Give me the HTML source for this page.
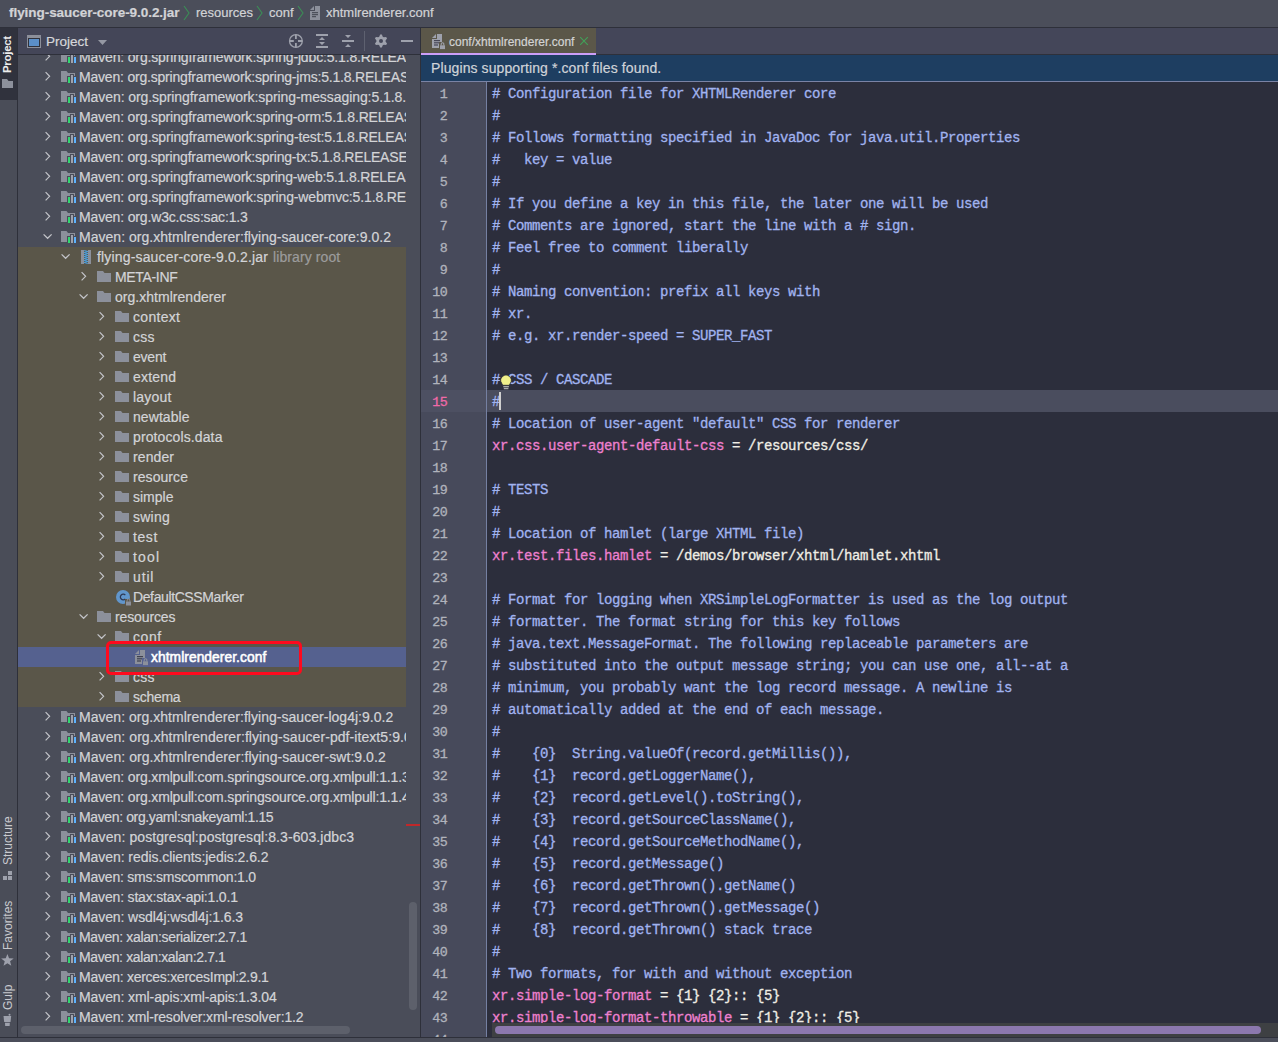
<!DOCTYPE html>
<html><head><meta charset="utf-8">
<style>
*{margin:0;padding:0;box-sizing:border-box}
html,body{width:1278px;height:1042px;overflow:hidden;background:#4b4e5a;font-family:"Liberation Sans",sans-serif}
.a{position:absolute}
.t{position:absolute;top:5px;white-space:nowrap;color:#d2d3d6;font-size:13px;-webkit-text-stroke:0.2px currentColor}
.row{position:absolute}
.tx{position:absolute;white-space:nowrap;color:#d3d4d7;font-size:14px;letter-spacing:0px;line-height:16px;-webkit-text-stroke:0.2px currentColor}
.ln{position:absolute;left:421px;width:26.1px;height:22px;line-height:22px;text-align:right;font-family:"Liberation Mono",monospace;font-size:13.33px;letter-spacing:-0.6px;-webkit-text-stroke:0.3px currentColor}
.cl{position:absolute;left:492px;height:22px;line-height:22px;white-space:pre;font-family:"Liberation Mono",monospace;font-size:14px;letter-spacing:-0.4px;color:#a1b3f0;-webkit-text-stroke:0.3px currentColor}
.k{color:#ee80cf}.v{color:#f0eee6}
</style></head><body>
<!-- title bar -->
<div class="a" style="left:0;top:0;width:1278px;height:27px;background:#4b4e5a"></div>
<span class="t" style="left:9px;top:4.5px;font-weight:bold;font-size:13.5px;letter-spacing:-0.05px">flying-saucer-core-9.0.2.jar</span>
<svg width="8" height="16" viewBox="0 0 8 16" style="position:absolute;left:183px;top:5px"><path d="M1 1 L6 8 L1 15" fill="none" stroke="#3b8f56" stroke-width="1.1"/></svg>
<span class="t" style="left:196px">resources</span>
<svg width="8" height="16" viewBox="0 0 8 16" style="position:absolute;left:256px;top:5px"><path d="M1 1 L6 8 L1 15" fill="none" stroke="#3b8f56" stroke-width="1.1"/></svg>
<span class="t" style="left:269px">conf</span>
<svg width="8" height="16" viewBox="0 0 8 16" style="position:absolute;left:297px;top:5px"><path d="M1 1 L6 8 L1 15" fill="none" stroke="#3b8f56" stroke-width="1.1"/></svg>
<svg width="10" height="14" viewBox="0 0 10 14" style="position:absolute;left:310px;top:6px"><path d="M0 4 L4 0 V4 Z" fill="#8c909b"/><path d="M5 0 H10 V14 H0 V5 H5 Z" fill="#8c909b"/><rect x="2" y="6.2" width="6" height="1" fill="#3f424d"/><rect x="2" y="8.2" width="6" height="1" fill="#3f424d"/><rect x="2" y="10.2" width="4" height="1" fill="#3f424d"/></svg>
<span class="t" style="left:326px">xhtmlrenderer.conf</span>
<div class="a" style="left:0;top:27px;width:1278px;height:1px;background:#2e303a"></div>

<!-- left stripe -->
<div class="a" style="left:0;top:28px;width:17px;height:1009px;background:#4a4d58"></div>
<div class="a" style="left:0;top:28px;width:17px;height:72px;background:#30323d"></div>
<div class="a" style="left:17px;top:28px;width:1px;height:1009px;background:#2e303a"></div>

<!-- project panel -->
<div class="a" style="left:18px;top:28px;width:402px;height:26px;background:#444658"></div>
<div class="a" style="left:18px;top:54px;width:402px;height:1px;background:#2e303a"></div>
<div class="a" id="tree" style="left:18px;top:55px;width:402px;height:982px;background:#4a4d59;overflow:hidden">
<div class="a" style="left:0;top:192px;width:388px;height:460px;background:#5a5649"></div>
<div class="a" style="left:0;top:592px;width:388px;height:20px;background:#55618f"></div>
<div class="a" style="left:0;top:0;width:388px;height:982px;overflow:hidden">
<svg width="8" height="12" viewBox="0 0 8 12" style="position:absolute;left:26px;top:-4px"><path d="M1.6 1.2 L5.6 5.3 L1.6 9.4" fill="none" stroke="#c3c4c9" stroke-width="1.2"/></svg><svg width="16" height="13" viewBox="0 0 16 13" style="position:absolute;left:43px;top:-4px"><path d="M0 0 H5.5 L7 2 H14 V11 H0 Z" fill="#8c909b"/><rect x="6" y="5" width="4" height="8" fill="#4a4d59"/><rect x="9" y="3" width="4" height="10" fill="#4a4d59"/><rect x="12" y="5" width="4" height="8" fill="#4a4d59"/><rect x="7" y="6" width="2" height="6" fill="#30d970"/><rect x="10" y="4" width="2" height="8" fill="#a0a3ae"/><rect x="13" y="6" width="2" height="6" fill="#5cb3ff"/></svg><span class="tx" style="left:61px;top:-6px;letter-spacing:-0.152px">Maven: org.springframework:spring-jdbc:5.1.8.RELEASE</span><svg width="8" height="12" viewBox="0 0 8 12" style="position:absolute;left:26px;top:16px"><path d="M1.6 1.2 L5.6 5.3 L1.6 9.4" fill="none" stroke="#c3c4c9" stroke-width="1.2"/></svg><svg width="16" height="13" viewBox="0 0 16 13" style="position:absolute;left:43px;top:16px"><path d="M0 0 H5.5 L7 2 H14 V11 H0 Z" fill="#8c909b"/><rect x="6" y="5" width="4" height="8" fill="#4a4d59"/><rect x="9" y="3" width="4" height="10" fill="#4a4d59"/><rect x="12" y="5" width="4" height="8" fill="#4a4d59"/><rect x="7" y="6" width="2" height="6" fill="#30d970"/><rect x="10" y="4" width="2" height="8" fill="#a0a3ae"/><rect x="13" y="6" width="2" height="6" fill="#5cb3ff"/></svg><span class="tx" style="left:61px;top:14px;letter-spacing:-0.2px">Maven: org.springframework:spring-jms:5.1.8.RELEASE</span><svg width="8" height="12" viewBox="0 0 8 12" style="position:absolute;left:26px;top:36px"><path d="M1.6 1.2 L5.6 5.3 L1.6 9.4" fill="none" stroke="#c3c4c9" stroke-width="1.2"/></svg><svg width="16" height="13" viewBox="0 0 16 13" style="position:absolute;left:43px;top:36px"><path d="M0 0 H5.5 L7 2 H14 V11 H0 Z" fill="#8c909b"/><rect x="6" y="5" width="4" height="8" fill="#4a4d59"/><rect x="9" y="3" width="4" height="10" fill="#4a4d59"/><rect x="12" y="5" width="4" height="8" fill="#4a4d59"/><rect x="7" y="6" width="2" height="6" fill="#30d970"/><rect x="10" y="4" width="2" height="8" fill="#a0a3ae"/><rect x="13" y="6" width="2" height="6" fill="#5cb3ff"/></svg><span class="tx" style="left:61px;top:34px;letter-spacing:-0.074px">Maven: org.springframework:spring-messaging:5.1.8.RELEASE</span><svg width="8" height="12" viewBox="0 0 8 12" style="position:absolute;left:26px;top:56px"><path d="M1.6 1.2 L5.6 5.3 L1.6 9.4" fill="none" stroke="#c3c4c9" stroke-width="1.2"/></svg><svg width="16" height="13" viewBox="0 0 16 13" style="position:absolute;left:43px;top:56px"><path d="M0 0 H5.5 L7 2 H14 V11 H0 Z" fill="#8c909b"/><rect x="6" y="5" width="4" height="8" fill="#4a4d59"/><rect x="9" y="3" width="4" height="10" fill="#4a4d59"/><rect x="12" y="5" width="4" height="8" fill="#4a4d59"/><rect x="7" y="6" width="2" height="6" fill="#30d970"/><rect x="10" y="4" width="2" height="8" fill="#a0a3ae"/><rect x="13" y="6" width="2" height="6" fill="#5cb3ff"/></svg><span class="tx" style="left:61px;top:54px;letter-spacing:-0.17px">Maven: org.springframework:spring-orm:5.1.8.RELEASE</span><svg width="8" height="12" viewBox="0 0 8 12" style="position:absolute;left:26px;top:76px"><path d="M1.6 1.2 L5.6 5.3 L1.6 9.4" fill="none" stroke="#c3c4c9" stroke-width="1.2"/></svg><svg width="16" height="13" viewBox="0 0 16 13" style="position:absolute;left:43px;top:76px"><path d="M0 0 H5.5 L7 2 H14 V11 H0 Z" fill="#8c909b"/><rect x="6" y="5" width="4" height="8" fill="#4a4d59"/><rect x="9" y="3" width="4" height="10" fill="#4a4d59"/><rect x="12" y="5" width="4" height="8" fill="#4a4d59"/><rect x="7" y="6" width="2" height="6" fill="#30d970"/><rect x="10" y="4" width="2" height="8" fill="#a0a3ae"/><rect x="13" y="6" width="2" height="6" fill="#5cb3ff"/></svg><span class="tx" style="left:61px;top:74px;letter-spacing:-0.136px">Maven: org.springframework:spring-test:5.1.8.RELEASE</span><svg width="8" height="12" viewBox="0 0 8 12" style="position:absolute;left:26px;top:96px"><path d="M1.6 1.2 L5.6 5.3 L1.6 9.4" fill="none" stroke="#c3c4c9" stroke-width="1.2"/></svg><svg width="16" height="13" viewBox="0 0 16 13" style="position:absolute;left:43px;top:96px"><path d="M0 0 H5.5 L7 2 H14 V11 H0 Z" fill="#8c909b"/><rect x="6" y="5" width="4" height="8" fill="#4a4d59"/><rect x="9" y="3" width="4" height="10" fill="#4a4d59"/><rect x="12" y="5" width="4" height="8" fill="#4a4d59"/><rect x="7" y="6" width="2" height="6" fill="#30d970"/><rect x="10" y="4" width="2" height="8" fill="#a0a3ae"/><rect x="13" y="6" width="2" height="6" fill="#5cb3ff"/></svg><span class="tx" style="left:61px;top:94px;letter-spacing:-0.199px">Maven: org.springframework:spring-tx:5.1.8.RELEASE</span><svg width="8" height="12" viewBox="0 0 8 12" style="position:absolute;left:26px;top:116px"><path d="M1.6 1.2 L5.6 5.3 L1.6 9.4" fill="none" stroke="#c3c4c9" stroke-width="1.2"/></svg><svg width="16" height="13" viewBox="0 0 16 13" style="position:absolute;left:43px;top:116px"><path d="M0 0 H5.5 L7 2 H14 V11 H0 Z" fill="#8c909b"/><rect x="6" y="5" width="4" height="8" fill="#4a4d59"/><rect x="9" y="3" width="4" height="10" fill="#4a4d59"/><rect x="12" y="5" width="4" height="8" fill="#4a4d59"/><rect x="7" y="6" width="2" height="6" fill="#30d970"/><rect x="10" y="4" width="2" height="8" fill="#a0a3ae"/><rect x="13" y="6" width="2" height="6" fill="#5cb3ff"/></svg><span class="tx" style="left:61px;top:114px;letter-spacing:-0.169px">Maven: org.springframework:spring-web:5.1.8.RELEASE</span><svg width="8" height="12" viewBox="0 0 8 12" style="position:absolute;left:26px;top:136px"><path d="M1.6 1.2 L5.6 5.3 L1.6 9.4" fill="none" stroke="#c3c4c9" stroke-width="1.2"/></svg><svg width="16" height="13" viewBox="0 0 16 13" style="position:absolute;left:43px;top:136px"><path d="M0 0 H5.5 L7 2 H14 V11 H0 Z" fill="#8c909b"/><rect x="6" y="5" width="4" height="8" fill="#4a4d59"/><rect x="9" y="3" width="4" height="10" fill="#4a4d59"/><rect x="12" y="5" width="4" height="8" fill="#4a4d59"/><rect x="7" y="6" width="2" height="6" fill="#30d970"/><rect x="10" y="4" width="2" height="8" fill="#a0a3ae"/><rect x="13" y="6" width="2" height="6" fill="#5cb3ff"/></svg><span class="tx" style="left:61px;top:134px;letter-spacing:-0.139px">Maven: org.springframework:spring-webmvc:5.1.8.RELEASE</span><svg width="8" height="12" viewBox="0 0 8 12" style="position:absolute;left:26px;top:156px"><path d="M1.6 1.2 L5.6 5.3 L1.6 9.4" fill="none" stroke="#c3c4c9" stroke-width="1.2"/></svg><svg width="16" height="13" viewBox="0 0 16 13" style="position:absolute;left:43px;top:156px"><path d="M0 0 H5.5 L7 2 H14 V11 H0 Z" fill="#8c909b"/><rect x="6" y="5" width="4" height="8" fill="#4a4d59"/><rect x="9" y="3" width="4" height="10" fill="#4a4d59"/><rect x="12" y="5" width="4" height="8" fill="#4a4d59"/><rect x="7" y="6" width="2" height="6" fill="#30d970"/><rect x="10" y="4" width="2" height="8" fill="#a0a3ae"/><rect x="13" y="6" width="2" height="6" fill="#5cb3ff"/></svg><span class="tx" style="left:61px;top:154px;letter-spacing:-0.157px">Maven: org.w3c.css:sac:1.3</span><svg width="12" height="8" viewBox="0 0 12 8" style="position:absolute;left:24px;top:178px"><path d="M1.6 1.4 L5.6 5.3 L9.6 1.4" fill="none" stroke="#c3c4c9" stroke-width="1.25"/></svg><svg width="16" height="13" viewBox="0 0 16 13" style="position:absolute;left:43px;top:176px"><path d="M0 0 H5.5 L7 2 H14 V11 H0 Z" fill="#8c909b"/><rect x="6" y="5" width="4" height="8" fill="#4a4d59"/><rect x="9" y="3" width="4" height="10" fill="#4a4d59"/><rect x="12" y="5" width="4" height="8" fill="#4a4d59"/><rect x="7" y="6" width="2" height="6" fill="#30d970"/><rect x="10" y="4" width="2" height="8" fill="#a0a3ae"/><rect x="13" y="6" width="2" height="6" fill="#5cb3ff"/></svg><span class="tx" style="left:61px;top:174px;letter-spacing:0.031px">Maven: org.xhtmlrenderer:flying-saucer-core:9.0.2</span><svg width="12" height="8" viewBox="0 0 12 8" style="position:absolute;left:42px;top:198px"><path d="M1.6 1.4 L5.6 5.3 L9.6 1.4" fill="none" stroke="#c3c4c9" stroke-width="1.25"/></svg><svg width="11" height="14" viewBox="0 0 11 14" style="position:absolute;left:63px;top:195px"><rect x="0" y="0" width="3" height="14" fill="#8c909b"/><rect x="7" y="0" width="3" height="14" fill="#8c909b"/><path d="M3.2 0.5 L6.8 1.5 L3.2 2.5 L6.8 3.5 L3.2 4.5 L6.8 5.5 L3.2 6.5 L6.8 7.5 L3.2 8.5 L6.8 9.5 L3.2 10.5 L6.8 11.5 L3.2 12.5 L6.8 13.5" fill="none" stroke="#4aa8f0" stroke-width="0.9"/></svg><span class="tx" style="left:79px;top:194px;letter-spacing:0.163px">flying-saucer-core-9.0.2.jar</span><span class="tx" style="left:255px;top:194px;color:#9c9c9c;letter-spacing:0.1px">library root</span><svg width="8" height="12" viewBox="0 0 8 12" style="position:absolute;left:62px;top:216px"><path d="M1.6 1.2 L5.6 5.3 L1.6 9.4" fill="none" stroke="#c3c4c9" stroke-width="1.2"/></svg><svg width="14" height="11" viewBox="0 0 14 11" style="position:absolute;left:79px;top:216px"><path d="M0 0 H6 L7.5 2 H14 V11 H0 Z" fill="#8c909b"/></svg><span class="tx" style="left:97px;top:214px;letter-spacing:-0.333px">META-INF</span><svg width="12" height="8" viewBox="0 0 12 8" style="position:absolute;left:60px;top:238px"><path d="M1.6 1.4 L5.6 5.3 L9.6 1.4" fill="none" stroke="#c3c4c9" stroke-width="1.25"/></svg><svg width="14" height="11" viewBox="0 0 14 11" style="position:absolute;left:79px;top:236px"><path d="M0 0 H6 L7.5 2 H14 V11 H0 Z" fill="#8c909b"/></svg><span class="tx" style="left:97px;top:234px;letter-spacing:0.03px">org.xhtmlrenderer</span><svg width="8" height="12" viewBox="0 0 8 12" style="position:absolute;left:80px;top:256px"><path d="M1.6 1.2 L5.6 5.3 L1.6 9.4" fill="none" stroke="#c3c4c9" stroke-width="1.2"/></svg><svg width="14" height="11" viewBox="0 0 14 11" style="position:absolute;left:97px;top:256px"><path d="M0 0 H6 L7.5 2 H14 V11 H0 Z" fill="#8c909b"/></svg><span class="tx" style="left:115px;top:254px;letter-spacing:0.308px">context</span><svg width="8" height="12" viewBox="0 0 8 12" style="position:absolute;left:80px;top:276px"><path d="M1.6 1.2 L5.6 5.3 L1.6 9.4" fill="none" stroke="#c3c4c9" stroke-width="1.2"/></svg><svg width="14" height="11" viewBox="0 0 14 11" style="position:absolute;left:97px;top:276px"><path d="M0 0 H6 L7.5 2 H14 V11 H0 Z" fill="#8c909b"/></svg><span class="tx" style="left:115px;top:274px;letter-spacing:0.2px">css</span><svg width="8" height="12" viewBox="0 0 8 12" style="position:absolute;left:80px;top:296px"><path d="M1.6 1.2 L5.6 5.3 L1.6 9.4" fill="none" stroke="#c3c4c9" stroke-width="1.2"/></svg><svg width="14" height="11" viewBox="0 0 14 11" style="position:absolute;left:97px;top:296px"><path d="M0 0 H6 L7.5 2 H14 V11 H0 Z" fill="#8c909b"/></svg><span class="tx" style="left:115px;top:294px;letter-spacing:-0.221px">event</span><svg width="8" height="12" viewBox="0 0 8 12" style="position:absolute;left:80px;top:316px"><path d="M1.6 1.2 L5.6 5.3 L1.6 9.4" fill="none" stroke="#c3c4c9" stroke-width="1.2"/></svg><svg width="14" height="11" viewBox="0 0 14 11" style="position:absolute;left:97px;top:316px"><path d="M0 0 H6 L7.5 2 H14 V11 H0 Z" fill="#8c909b"/></svg><span class="tx" style="left:115px;top:314px;letter-spacing:0.183px">extend</span><svg width="8" height="12" viewBox="0 0 8 12" style="position:absolute;left:80px;top:336px"><path d="M1.6 1.2 L5.6 5.3 L1.6 9.4" fill="none" stroke="#c3c4c9" stroke-width="1.2"/></svg><svg width="14" height="11" viewBox="0 0 14 11" style="position:absolute;left:97px;top:336px"><path d="M0 0 H6 L7.5 2 H14 V11 H0 Z" fill="#8c909b"/></svg><span class="tx" style="left:115px;top:334px;letter-spacing:0.183px">layout</span><svg width="8" height="12" viewBox="0 0 8 12" style="position:absolute;left:80px;top:356px"><path d="M1.6 1.2 L5.6 5.3 L1.6 9.4" fill="none" stroke="#c3c4c9" stroke-width="1.2"/></svg><svg width="14" height="11" viewBox="0 0 14 11" style="position:absolute;left:97px;top:356px"><path d="M0 0 H6 L7.5 2 H14 V11 H0 Z" fill="#8c909b"/></svg><span class="tx" style="left:115px;top:354px;letter-spacing:0.067px">newtable</span><svg width="8" height="12" viewBox="0 0 8 12" style="position:absolute;left:80px;top:376px"><path d="M1.6 1.2 L5.6 5.3 L1.6 9.4" fill="none" stroke="#c3c4c9" stroke-width="1.2"/></svg><svg width="14" height="11" viewBox="0 0 14 11" style="position:absolute;left:97px;top:376px"><path d="M0 0 H6 L7.5 2 H14 V11 H0 Z" fill="#8c909b"/></svg><span class="tx" style="left:115px;top:374px;letter-spacing:0.113px">protocols.data</span><svg width="8" height="12" viewBox="0 0 8 12" style="position:absolute;left:80px;top:396px"><path d="M1.6 1.2 L5.6 5.3 L1.6 9.4" fill="none" stroke="#c3c4c9" stroke-width="1.2"/></svg><svg width="14" height="11" viewBox="0 0 14 11" style="position:absolute;left:97px;top:396px"><path d="M0 0 H6 L7.5 2 H14 V11 H0 Z" fill="#8c909b"/></svg><span class="tx" style="left:115px;top:394px;letter-spacing:0.089px">render</span><svg width="8" height="12" viewBox="0 0 8 12" style="position:absolute;left:80px;top:416px"><path d="M1.6 1.2 L5.6 5.3 L1.6 9.4" fill="none" stroke="#c3c4c9" stroke-width="1.2"/></svg><svg width="14" height="11" viewBox="0 0 14 11" style="position:absolute;left:97px;top:416px"><path d="M0 0 H6 L7.5 2 H14 V11 H0 Z" fill="#8c909b"/></svg><span class="tx" style="left:115px;top:414px;letter-spacing:0.065px">resource</span><svg width="8" height="12" viewBox="0 0 8 12" style="position:absolute;left:80px;top:436px"><path d="M1.6 1.2 L5.6 5.3 L1.6 9.4" fill="none" stroke="#c3c4c9" stroke-width="1.2"/></svg><svg width="14" height="11" viewBox="0 0 14 11" style="position:absolute;left:97px;top:436px"><path d="M0 0 H6 L7.5 2 H14 V11 H0 Z" fill="#8c909b"/></svg><span class="tx" style="left:115px;top:434px;letter-spacing:-0.001px">simple</span><svg width="8" height="12" viewBox="0 0 8 12" style="position:absolute;left:80px;top:456px"><path d="M1.6 1.2 L5.6 5.3 L1.6 9.4" fill="none" stroke="#c3c4c9" stroke-width="1.2"/></svg><svg width="14" height="11" viewBox="0 0 14 11" style="position:absolute;left:97px;top:456px"><path d="M0 0 H6 L7.5 2 H14 V11 H0 Z" fill="#8c909b"/></svg><span class="tx" style="left:115px;top:454px;letter-spacing:0.223px">swing</span><svg width="8" height="12" viewBox="0 0 8 12" style="position:absolute;left:80px;top:476px"><path d="M1.6 1.2 L5.6 5.3 L1.6 9.4" fill="none" stroke="#c3c4c9" stroke-width="1.2"/></svg><svg width="14" height="11" viewBox="0 0 14 11" style="position:absolute;left:97px;top:476px"><path d="M0 0 H6 L7.5 2 H14 V11 H0 Z" fill="#8c909b"/></svg><span class="tx" style="left:115px;top:474px;letter-spacing:0.571px">test</span><svg width="8" height="12" viewBox="0 0 8 12" style="position:absolute;left:80px;top:496px"><path d="M1.6 1.2 L5.6 5.3 L1.6 9.4" fill="none" stroke="#c3c4c9" stroke-width="1.2"/></svg><svg width="14" height="11" viewBox="0 0 14 11" style="position:absolute;left:97px;top:496px"><path d="M0 0 H6 L7.5 2 H14 V11 H0 Z" fill="#8c909b"/></svg><span class="tx" style="left:115px;top:494px;letter-spacing:1.143px">tool</span><svg width="8" height="12" viewBox="0 0 8 12" style="position:absolute;left:80px;top:516px"><path d="M1.6 1.2 L5.6 5.3 L1.6 9.4" fill="none" stroke="#c3c4c9" stroke-width="1.2"/></svg><svg width="14" height="11" viewBox="0 0 14 11" style="position:absolute;left:97px;top:516px"><path d="M0 0 H6 L7.5 2 H14 V11 H0 Z" fill="#8c909b"/></svg><span class="tx" style="left:115px;top:514px;letter-spacing:0.857px">util</span><svg width="16" height="16" viewBox="0 0 16 16" style="position:absolute;left:98px;top:535px"><circle cx="7" cy="7" r="7" fill="#6196cc"/><path d="M9.3 5.2 A2.8 2.8 0 1 0 9.3 8.8" fill="none" stroke="#2e3a55" stroke-width="1.3"/><rect x="9" y="9" width="6" height="7" fill="#5a5649"/><rect x="10" y="11.5" width="5" height="4" fill="#8c909b"/><path d="M11.2 11.5 V10.3 A1.3 1.3 0 0 1 13.8 10.3 V11.5" fill="none" stroke="#8c909b" stroke-width="1"/></svg><span class="tx" style="left:115px;top:534px;letter-spacing:-0.387px">DefaultCSSMarker</span><svg width="12" height="8" viewBox="0 0 12 8" style="position:absolute;left:60px;top:558px"><path d="M1.6 1.4 L5.6 5.3 L9.6 1.4" fill="none" stroke="#c3c4c9" stroke-width="1.25"/></svg><svg width="14" height="11" viewBox="0 0 14 11" style="position:absolute;left:79px;top:556px"><path d="M0 0 H6 L7.5 2 H14 V11 H0 Z" fill="#8c909b"/></svg><span class="tx" style="left:97px;top:554px;letter-spacing:-0.116px">resources</span><svg width="12" height="8" viewBox="0 0 12 8" style="position:absolute;left:78px;top:578px"><path d="M1.6 1.4 L5.6 5.3 L9.6 1.4" fill="none" stroke="#c3c4c9" stroke-width="1.25"/></svg><svg width="14" height="11" viewBox="0 0 14 11" style="position:absolute;left:97px;top:576px"><path d="M0 0 H6 L7.5 2 H14 V11 H0 Z" fill="#8c909b"/></svg><span class="tx" style="left:115px;top:574px;letter-spacing:0.571px">conf</span><svg width="14" height="16" viewBox="0 0 14 16" style="position:absolute;left:117px;top:595px"><path d="M0 4 L4 0 V4 Z" fill="#8c909b"/><path d="M5 0 H10 V14 H0 V5 H5 Z" fill="#8c909b"/><rect x="2" y="6" width="6" height="1.2" fill="#3f4150"/><rect x="2" y="8.2" width="6" height="1.2" fill="#3f4150"/><rect x="2" y="10.4" width="4" height="1.2" fill="#3f4150"/><rect x="7" y="8" width="7" height="8" fill="#55618f"/><rect x="8" y="11.3" width="5" height="3.8" fill="#8c909b"/><path d="M9.2 11.5 V10 A1.3 1.3 0 0 1 11.8 10 V11.5" fill="none" stroke="#8c909b" stroke-width="1.1"/></svg><span class="tx" style="left:133px;top:594.5px;color:#fff;font-size:13.8px;-webkit-text-stroke:0.55px #fff;letter-spacing:0.057px">xhtmlrenderer.conf</span><svg width="8" height="12" viewBox="0 0 8 12" style="position:absolute;left:80px;top:616px"><path d="M1.6 1.2 L5.6 5.3 L1.6 9.4" fill="none" stroke="#c3c4c9" stroke-width="1.2"/></svg><svg width="14" height="11" viewBox="0 0 14 11" style="position:absolute;left:97px;top:616px"><path d="M0 0 H6 L7.5 2 H14 V11 H0 Z" fill="#8c909b"/></svg><span class="tx" style="left:115px;top:614px;letter-spacing:0.2px">css</span><svg width="8" height="12" viewBox="0 0 8 12" style="position:absolute;left:80px;top:636px"><path d="M1.6 1.2 L5.6 5.3 L1.6 9.4" fill="none" stroke="#c3c4c9" stroke-width="1.2"/></svg><svg width="14" height="11" viewBox="0 0 14 11" style="position:absolute;left:97px;top:636px"><path d="M0 0 H6 L7.5 2 H14 V11 H0 Z" fill="#8c909b"/></svg><span class="tx" style="left:115px;top:634px;letter-spacing:-0.272px">schema</span><svg width="8" height="12" viewBox="0 0 8 12" style="position:absolute;left:26px;top:656px"><path d="M1.6 1.2 L5.6 5.3 L1.6 9.4" fill="none" stroke="#c3c4c9" stroke-width="1.2"/></svg><svg width="16" height="13" viewBox="0 0 16 13" style="position:absolute;left:43px;top:656px"><path d="M0 0 H5.5 L7 2 H14 V11 H0 Z" fill="#8c909b"/><rect x="6" y="5" width="4" height="8" fill="#4a4d59"/><rect x="9" y="3" width="4" height="10" fill="#4a4d59"/><rect x="12" y="5" width="4" height="8" fill="#4a4d59"/><rect x="7" y="6" width="2" height="6" fill="#30d970"/><rect x="10" y="4" width="2" height="8" fill="#a0a3ae"/><rect x="13" y="6" width="2" height="6" fill="#5cb3ff"/></svg><span class="tx" style="left:61px;top:654px;letter-spacing:0.03px">Maven: org.xhtmlrenderer:flying-saucer-log4j:9.0.2</span><svg width="8" height="12" viewBox="0 0 8 12" style="position:absolute;left:26px;top:676px"><path d="M1.6 1.2 L5.6 5.3 L1.6 9.4" fill="none" stroke="#c3c4c9" stroke-width="1.2"/></svg><svg width="16" height="13" viewBox="0 0 16 13" style="position:absolute;left:43px;top:676px"><path d="M0 0 H5.5 L7 2 H14 V11 H0 Z" fill="#8c909b"/><rect x="6" y="5" width="4" height="8" fill="#4a4d59"/><rect x="9" y="3" width="4" height="10" fill="#4a4d59"/><rect x="12" y="5" width="4" height="8" fill="#4a4d59"/><rect x="7" y="6" width="2" height="6" fill="#30d970"/><rect x="10" y="4" width="2" height="8" fill="#a0a3ae"/><rect x="13" y="6" width="2" height="6" fill="#5cb3ff"/></svg><span class="tx" style="left:61px;top:674px;letter-spacing:0.069px">Maven: org.xhtmlrenderer:flying-saucer-pdf-itext5:9.0.2</span><svg width="8" height="12" viewBox="0 0 8 12" style="position:absolute;left:26px;top:696px"><path d="M1.6 1.2 L5.6 5.3 L1.6 9.4" fill="none" stroke="#c3c4c9" stroke-width="1.2"/></svg><svg width="16" height="13" viewBox="0 0 16 13" style="position:absolute;left:43px;top:696px"><path d="M0 0 H5.5 L7 2 H14 V11 H0 Z" fill="#8c909b"/><rect x="6" y="5" width="4" height="8" fill="#4a4d59"/><rect x="9" y="3" width="4" height="10" fill="#4a4d59"/><rect x="12" y="5" width="4" height="8" fill="#4a4d59"/><rect x="7" y="6" width="2" height="6" fill="#30d970"/><rect x="10" y="4" width="2" height="8" fill="#a0a3ae"/><rect x="13" y="6" width="2" height="6" fill="#5cb3ff"/></svg><span class="tx" style="left:61px;top:694px;letter-spacing:0.052px">Maven: org.xhtmlrenderer:flying-saucer-swt:9.0.2</span><svg width="8" height="12" viewBox="0 0 8 12" style="position:absolute;left:26px;top:716px"><path d="M1.6 1.2 L5.6 5.3 L1.6 9.4" fill="none" stroke="#c3c4c9" stroke-width="1.2"/></svg><svg width="16" height="13" viewBox="0 0 16 13" style="position:absolute;left:43px;top:716px"><path d="M0 0 H5.5 L7 2 H14 V11 H0 Z" fill="#8c909b"/><rect x="6" y="5" width="4" height="8" fill="#4a4d59"/><rect x="9" y="3" width="4" height="10" fill="#4a4d59"/><rect x="12" y="5" width="4" height="8" fill="#4a4d59"/><rect x="7" y="6" width="2" height="6" fill="#30d970"/><rect x="10" y="4" width="2" height="8" fill="#a0a3ae"/><rect x="13" y="6" width="2" height="6" fill="#5cb3ff"/></svg><span class="tx" style="left:61px;top:714px;letter-spacing:-0.148px">Maven: org.xmlpull:com.springsource.org.xmlpull:1.1.3.4-O</span><svg width="8" height="12" viewBox="0 0 8 12" style="position:absolute;left:26px;top:736px"><path d="M1.6 1.2 L5.6 5.3 L1.6 9.4" fill="none" stroke="#c3c4c9" stroke-width="1.2"/></svg><svg width="16" height="13" viewBox="0 0 16 13" style="position:absolute;left:43px;top:736px"><path d="M0 0 H5.5 L7 2 H14 V11 H0 Z" fill="#8c909b"/><rect x="6" y="5" width="4" height="8" fill="#4a4d59"/><rect x="9" y="3" width="4" height="10" fill="#4a4d59"/><rect x="12" y="5" width="4" height="8" fill="#4a4d59"/><rect x="7" y="6" width="2" height="6" fill="#30d970"/><rect x="10" y="4" width="2" height="8" fill="#a0a3ae"/><rect x="13" y="6" width="2" height="6" fill="#5cb3ff"/></svg><span class="tx" style="left:61px;top:734px;letter-spacing:-0.148px">Maven: org.xmlpull:com.springsource.org.xmlpull:1.1.4c</span><svg width="8" height="12" viewBox="0 0 8 12" style="position:absolute;left:26px;top:756px"><path d="M1.6 1.2 L5.6 5.3 L1.6 9.4" fill="none" stroke="#c3c4c9" stroke-width="1.2"/></svg><svg width="16" height="13" viewBox="0 0 16 13" style="position:absolute;left:43px;top:756px"><path d="M0 0 H5.5 L7 2 H14 V11 H0 Z" fill="#8c909b"/><rect x="6" y="5" width="4" height="8" fill="#4a4d59"/><rect x="9" y="3" width="4" height="10" fill="#4a4d59"/><rect x="12" y="5" width="4" height="8" fill="#4a4d59"/><rect x="7" y="6" width="2" height="6" fill="#30d970"/><rect x="10" y="4" width="2" height="8" fill="#a0a3ae"/><rect x="13" y="6" width="2" height="6" fill="#5cb3ff"/></svg><span class="tx" style="left:61px;top:754px;letter-spacing:-0.372px">Maven: org.yaml:snakeyaml:1.15</span><svg width="8" height="12" viewBox="0 0 8 12" style="position:absolute;left:26px;top:776px"><path d="M1.6 1.2 L5.6 5.3 L1.6 9.4" fill="none" stroke="#c3c4c9" stroke-width="1.2"/></svg><svg width="16" height="13" viewBox="0 0 16 13" style="position:absolute;left:43px;top:776px"><path d="M0 0 H5.5 L7 2 H14 V11 H0 Z" fill="#8c909b"/><rect x="6" y="5" width="4" height="8" fill="#4a4d59"/><rect x="9" y="3" width="4" height="10" fill="#4a4d59"/><rect x="12" y="5" width="4" height="8" fill="#4a4d59"/><rect x="7" y="6" width="2" height="6" fill="#30d970"/><rect x="10" y="4" width="2" height="8" fill="#a0a3ae"/><rect x="13" y="6" width="2" height="6" fill="#5cb3ff"/></svg><span class="tx" style="left:61px;top:774px;letter-spacing:0.084px">Maven: postgresql:postgresql:8.3-603.jdbc3</span><svg width="8" height="12" viewBox="0 0 8 12" style="position:absolute;left:26px;top:796px"><path d="M1.6 1.2 L5.6 5.3 L1.6 9.4" fill="none" stroke="#c3c4c9" stroke-width="1.2"/></svg><svg width="16" height="13" viewBox="0 0 16 13" style="position:absolute;left:43px;top:796px"><path d="M0 0 H5.5 L7 2 H14 V11 H0 Z" fill="#8c909b"/><rect x="6" y="5" width="4" height="8" fill="#4a4d59"/><rect x="9" y="3" width="4" height="10" fill="#4a4d59"/><rect x="12" y="5" width="4" height="8" fill="#4a4d59"/><rect x="7" y="6" width="2" height="6" fill="#30d970"/><rect x="10" y="4" width="2" height="8" fill="#a0a3ae"/><rect x="13" y="6" width="2" height="6" fill="#5cb3ff"/></svg><span class="tx" style="left:61px;top:794px;letter-spacing:-0.063px">Maven: redis.clients:jedis:2.6.2</span><svg width="8" height="12" viewBox="0 0 8 12" style="position:absolute;left:26px;top:816px"><path d="M1.6 1.2 L5.6 5.3 L1.6 9.4" fill="none" stroke="#c3c4c9" stroke-width="1.2"/></svg><svg width="16" height="13" viewBox="0 0 16 13" style="position:absolute;left:43px;top:816px"><path d="M0 0 H5.5 L7 2 H14 V11 H0 Z" fill="#8c909b"/><rect x="6" y="5" width="4" height="8" fill="#4a4d59"/><rect x="9" y="3" width="4" height="10" fill="#4a4d59"/><rect x="12" y="5" width="4" height="8" fill="#4a4d59"/><rect x="7" y="6" width="2" height="6" fill="#30d970"/><rect x="10" y="4" width="2" height="8" fill="#a0a3ae"/><rect x="13" y="6" width="2" height="6" fill="#5cb3ff"/></svg><span class="tx" style="left:61px;top:814px;letter-spacing:-0.213px">Maven: sms:smscommon:1.0</span><svg width="8" height="12" viewBox="0 0 8 12" style="position:absolute;left:26px;top:836px"><path d="M1.6 1.2 L5.6 5.3 L1.6 9.4" fill="none" stroke="#c3c4c9" stroke-width="1.2"/></svg><svg width="16" height="13" viewBox="0 0 16 13" style="position:absolute;left:43px;top:836px"><path d="M0 0 H5.5 L7 2 H14 V11 H0 Z" fill="#8c909b"/><rect x="6" y="5" width="4" height="8" fill="#4a4d59"/><rect x="9" y="3" width="4" height="10" fill="#4a4d59"/><rect x="12" y="5" width="4" height="8" fill="#4a4d59"/><rect x="7" y="6" width="2" height="6" fill="#30d970"/><rect x="10" y="4" width="2" height="8" fill="#a0a3ae"/><rect x="13" y="6" width="2" height="6" fill="#5cb3ff"/></svg><span class="tx" style="left:61px;top:834px;letter-spacing:-0.178px">Maven: stax:stax-api:1.0.1</span><svg width="8" height="12" viewBox="0 0 8 12" style="position:absolute;left:26px;top:856px"><path d="M1.6 1.2 L5.6 5.3 L1.6 9.4" fill="none" stroke="#c3c4c9" stroke-width="1.2"/></svg><svg width="16" height="13" viewBox="0 0 16 13" style="position:absolute;left:43px;top:856px"><path d="M0 0 H5.5 L7 2 H14 V11 H0 Z" fill="#8c909b"/><rect x="6" y="5" width="4" height="8" fill="#4a4d59"/><rect x="9" y="3" width="4" height="10" fill="#4a4d59"/><rect x="12" y="5" width="4" height="8" fill="#4a4d59"/><rect x="7" y="6" width="2" height="6" fill="#30d970"/><rect x="10" y="4" width="2" height="8" fill="#a0a3ae"/><rect x="13" y="6" width="2" height="6" fill="#5cb3ff"/></svg><span class="tx" style="left:61px;top:854px;letter-spacing:-0.098px">Maven: wsdl4j:wsdl4j:1.6.3</span><svg width="8" height="12" viewBox="0 0 8 12" style="position:absolute;left:26px;top:876px"><path d="M1.6 1.2 L5.6 5.3 L1.6 9.4" fill="none" stroke="#c3c4c9" stroke-width="1.2"/></svg><svg width="16" height="13" viewBox="0 0 16 13" style="position:absolute;left:43px;top:876px"><path d="M0 0 H5.5 L7 2 H14 V11 H0 Z" fill="#8c909b"/><rect x="6" y="5" width="4" height="8" fill="#4a4d59"/><rect x="9" y="3" width="4" height="10" fill="#4a4d59"/><rect x="12" y="5" width="4" height="8" fill="#4a4d59"/><rect x="7" y="6" width="2" height="6" fill="#30d970"/><rect x="10" y="4" width="2" height="8" fill="#a0a3ae"/><rect x="13" y="6" width="2" height="6" fill="#5cb3ff"/></svg><span class="tx" style="left:61px;top:874px;letter-spacing:-0.351px">Maven: xalan:serializer:2.7.1</span><svg width="8" height="12" viewBox="0 0 8 12" style="position:absolute;left:26px;top:896px"><path d="M1.6 1.2 L5.6 5.3 L1.6 9.4" fill="none" stroke="#c3c4c9" stroke-width="1.2"/></svg><svg width="16" height="13" viewBox="0 0 16 13" style="position:absolute;left:43px;top:896px"><path d="M0 0 H5.5 L7 2 H14 V11 H0 Z" fill="#8c909b"/><rect x="6" y="5" width="4" height="8" fill="#4a4d59"/><rect x="9" y="3" width="4" height="10" fill="#4a4d59"/><rect x="12" y="5" width="4" height="8" fill="#4a4d59"/><rect x="7" y="6" width="2" height="6" fill="#30d970"/><rect x="10" y="4" width="2" height="8" fill="#a0a3ae"/><rect x="13" y="6" width="2" height="6" fill="#5cb3ff"/></svg><span class="tx" style="left:61px;top:894px;letter-spacing:-0.381px">Maven: xalan:xalan:2.7.1</span><svg width="8" height="12" viewBox="0 0 8 12" style="position:absolute;left:26px;top:916px"><path d="M1.6 1.2 L5.6 5.3 L1.6 9.4" fill="none" stroke="#c3c4c9" stroke-width="1.2"/></svg><svg width="16" height="13" viewBox="0 0 16 13" style="position:absolute;left:43px;top:916px"><path d="M0 0 H5.5 L7 2 H14 V11 H0 Z" fill="#8c909b"/><rect x="6" y="5" width="4" height="8" fill="#4a4d59"/><rect x="9" y="3" width="4" height="10" fill="#4a4d59"/><rect x="12" y="5" width="4" height="8" fill="#4a4d59"/><rect x="7" y="6" width="2" height="6" fill="#30d970"/><rect x="10" y="4" width="2" height="8" fill="#a0a3ae"/><rect x="13" y="6" width="2" height="6" fill="#5cb3ff"/></svg><span class="tx" style="left:61px;top:914px;letter-spacing:-0.27px">Maven: xerces:xercesImpl:2.9.1</span><svg width="8" height="12" viewBox="0 0 8 12" style="position:absolute;left:26px;top:936px"><path d="M1.6 1.2 L5.6 5.3 L1.6 9.4" fill="none" stroke="#c3c4c9" stroke-width="1.2"/></svg><svg width="16" height="13" viewBox="0 0 16 13" style="position:absolute;left:43px;top:936px"><path d="M0 0 H5.5 L7 2 H14 V11 H0 Z" fill="#8c909b"/><rect x="6" y="5" width="4" height="8" fill="#4a4d59"/><rect x="9" y="3" width="4" height="10" fill="#4a4d59"/><rect x="12" y="5" width="4" height="8" fill="#4a4d59"/><rect x="7" y="6" width="2" height="6" fill="#30d970"/><rect x="10" y="4" width="2" height="8" fill="#a0a3ae"/><rect x="13" y="6" width="2" height="6" fill="#5cb3ff"/></svg><span class="tx" style="left:61px;top:934px;letter-spacing:-0.098px">Maven: xml-apis:xml-apis:1.3.04</span><svg width="8" height="12" viewBox="0 0 8 12" style="position:absolute;left:26px;top:956px"><path d="M1.6 1.2 L5.6 5.3 L1.6 9.4" fill="none" stroke="#c3c4c9" stroke-width="1.2"/></svg><svg width="16" height="13" viewBox="0 0 16 13" style="position:absolute;left:43px;top:956px"><path d="M0 0 H5.5 L7 2 H14 V11 H0 Z" fill="#8c909b"/><rect x="6" y="5" width="4" height="8" fill="#4a4d59"/><rect x="9" y="3" width="4" height="10" fill="#4a4d59"/><rect x="12" y="5" width="4" height="8" fill="#4a4d59"/><rect x="7" y="6" width="2" height="6" fill="#30d970"/><rect x="10" y="4" width="2" height="8" fill="#a0a3ae"/><rect x="13" y="6" width="2" height="6" fill="#5cb3ff"/></svg><span class="tx" style="left:61px;top:954px;letter-spacing:-0.141px">Maven: xml-resolver:xml-resolver:1.2</span>
</div>
</div>
<div class="a" style="left:420px;top:28px;width:1px;height:1009px;background:#2e303a"></div>

<!-- editor -->
<div class="a" style="left:421px;top:28px;width:857px;height:26px;background:#444659"></div>
<div class="a" style="left:421px;top:54px;width:857px;height:1px;background:#2e303a"></div>
<div class="a" style="left:421px;top:28px;width:175px;height:25px;background:#5b5749"></div>
<div class="a" style="left:421px;top:53px;width:175px;height:2px;background:#cc9ef8"></div>
<span class="a" style="left:449px;top:35px;font-size:12px;color:#d3d3d3;white-space:nowrap;-webkit-text-stroke:0.2px currentColor">conf/xhtmlrenderer.conf</span>
<div class="a" style="left:421px;top:55px;width:857px;height:26px;background:#1e3e61"></div>
<div class="a" style="left:421px;top:81px;width:857px;height:1px;background:#7a83a5"></div>
<span class="a" style="left:431px;top:60px;font-size:14px;letter-spacing:0.1px;color:#d0d3d8;white-space:nowrap;-webkit-text-stroke:0.2px currentColor">Plugins supporting *.conf files found.</span>
<div class="a" style="left:421px;top:82px;width:65px;height:955px;background:#474a5b"></div>
<div class="a" style="left:486px;top:82px;width:1px;height:955px;background:#7580a2"></div>
<div class="a" style="left:487px;top:82px;width:791px;height:955px;background:#2c2e3c"></div>
<div class="a" style="left:421px;top:390px;width:65px;height:22px;background:#4d5062"></div>
<div class="a" style="left:487px;top:390px;width:791px;height:22px;background:#4a4d5e"></div>
<div class="a" style="left:0;top:0;width:1278px;height:1037px;overflow:hidden">
<div class="ln" style="top:84px;color:#b0b3bc">1</div><div class="ln" style="top:106px;color:#b0b3bc">2</div><div class="ln" style="top:128px;color:#b0b3bc">3</div><div class="ln" style="top:150px;color:#b0b3bc">4</div><div class="ln" style="top:172px;color:#b0b3bc">5</div><div class="ln" style="top:194px;color:#b0b3bc">6</div><div class="ln" style="top:216px;color:#b0b3bc">7</div><div class="ln" style="top:238px;color:#b0b3bc">8</div><div class="ln" style="top:260px;color:#b0b3bc">9</div><div class="ln" style="top:282px;color:#b0b3bc">10</div><div class="ln" style="top:304px;color:#b0b3bc">11</div><div class="ln" style="top:326px;color:#b0b3bc">12</div><div class="ln" style="top:348px;color:#b0b3bc">13</div><div class="ln" style="top:370px;color:#b0b3bc">14</div><div class="ln" style="top:392px;color:#f06aa8">15</div><div class="ln" style="top:414px;color:#b0b3bc">16</div><div class="ln" style="top:436px;color:#b0b3bc">17</div><div class="ln" style="top:458px;color:#b0b3bc">18</div><div class="ln" style="top:480px;color:#b0b3bc">19</div><div class="ln" style="top:502px;color:#b0b3bc">20</div><div class="ln" style="top:524px;color:#b0b3bc">21</div><div class="ln" style="top:546px;color:#b0b3bc">22</div><div class="ln" style="top:568px;color:#b0b3bc">23</div><div class="ln" style="top:590px;color:#b0b3bc">24</div><div class="ln" style="top:612px;color:#b0b3bc">25</div><div class="ln" style="top:634px;color:#b0b3bc">26</div><div class="ln" style="top:656px;color:#b0b3bc">27</div><div class="ln" style="top:678px;color:#b0b3bc">28</div><div class="ln" style="top:700px;color:#b0b3bc">29</div><div class="ln" style="top:722px;color:#b0b3bc">30</div><div class="ln" style="top:744px;color:#b0b3bc">31</div><div class="ln" style="top:766px;color:#b0b3bc">32</div><div class="ln" style="top:788px;color:#b0b3bc">33</div><div class="ln" style="top:810px;color:#b0b3bc">34</div><div class="ln" style="top:832px;color:#b0b3bc">35</div><div class="ln" style="top:854px;color:#b0b3bc">36</div><div class="ln" style="top:876px;color:#b0b3bc">37</div><div class="ln" style="top:898px;color:#b0b3bc">38</div><div class="ln" style="top:920px;color:#b0b3bc">39</div><div class="ln" style="top:942px;color:#b0b3bc">40</div><div class="ln" style="top:964px;color:#b0b3bc">41</div><div class="ln" style="top:986px;color:#b0b3bc">42</div><div class="ln" style="top:1008px;color:#b0b3bc">43</div><div class="ln" style="top:1030px;color:#b0b3bc">44</div>
<div class="cl" style="top:83px"># Configuration file for XHTMLRenderer core</div><div class="cl" style="top:105px">#</div><div class="cl" style="top:127px"># Follows formatting specified in JavaDoc for java.util.Properties</div><div class="cl" style="top:149px">#   key = value</div><div class="cl" style="top:171px">#</div><div class="cl" style="top:193px"># If you define a key in this file, the later one will be used</div><div class="cl" style="top:215px"># Comments are ignored, start the line with a # sign.</div><div class="cl" style="top:237px"># Feel free to comment liberally</div><div class="cl" style="top:259px">#</div><div class="cl" style="top:281px"># Naming convention: prefix all keys with</div><div class="cl" style="top:303px"># xr.</div><div class="cl" style="top:325px"># e.g. xr.render-speed = SUPER_FAST</div><div class="cl" style="top:347px"></div><div class="cl" style="top:369px"># CSS / CASCADE</div><div class="cl" style="top:391px">#</div><div class="cl" style="top:413px"># Location of user-agent &quot;default&quot; CSS for renderer</div><div class="cl" style="top:435px"><span class="k">xr.css.user-agent-default-css</span><span class="v"> = /resources/css/</span></div><div class="cl" style="top:457px"></div><div class="cl" style="top:479px"># TESTS</div><div class="cl" style="top:501px">#</div><div class="cl" style="top:523px"># Location of hamlet (large XHTML file)</div><div class="cl" style="top:545px"><span class="k">xr.test.files.hamlet</span><span class="v"> = /demos/browser/xhtml/hamlet.xhtml</span></div><div class="cl" style="top:567px"></div><div class="cl" style="top:589px"># Format for logging when XRSimpleLogFormatter is used as the log output</div><div class="cl" style="top:611px"># formatter. The format string for this key follows</div><div class="cl" style="top:633px"># java.text.MessageFormat. The following replaceable parameters are</div><div class="cl" style="top:655px"># substituted into the output message string; you can use one, all--at a</div><div class="cl" style="top:677px"># minimum, you probably want the log record message. A newline is</div><div class="cl" style="top:699px"># automatically added at the end of each message.</div><div class="cl" style="top:721px">#</div><div class="cl" style="top:743px">#    {0}  String.valueOf(record.getMillis()),</div><div class="cl" style="top:765px">#    {1}  record.getLoggerName(),</div><div class="cl" style="top:787px">#    {2}  record.getLevel().toString(),</div><div class="cl" style="top:809px">#    {3}  record.getSourceClassName(),</div><div class="cl" style="top:831px">#    {4}  record.getSourceMethodName(),</div><div class="cl" style="top:853px">#    {5}  record.getMessage()</div><div class="cl" style="top:875px">#    {6}  record.getThrown().getName()</div><div class="cl" style="top:897px">#    {7}  record.getThrown().getMessage()</div><div class="cl" style="top:919px">#    {8}  record.getThrown() stack trace</div><div class="cl" style="top:941px">#</div><div class="cl" style="top:963px"># Two formats, for with and without exception</div><div class="cl" style="top:985px"><span class="k">xr.simple-log-format</span><span class="v"> = {1} {2}:: {5}</span></div><div class="cl" style="top:1007px"><span class="k">xr.simple-log-format-throwable</span><span class="v"> = {1} {2}:: {5}</span></div><div class="cl" style="top:1029px"></div>
</div>
<div class="a" style="left:499px;top:392px;width:2px;height:18px;background:#cfcfcf"></div>

<div class="a" style="left:-0.5px;top:73px;width:37px;height:14px;transform-origin:0 0;transform:rotate(-90deg);font-size:11.5px;letter-spacing:-0.3px;font-weight:bold;color:#ececec;white-space:nowrap;line-height:14px">Project</div><svg width="12" height="10" viewBox="0 0 12 10" style="position:absolute;left:2px;top:79px"><path d="M0 0 H5 L6.5 2 H11 V9 H0 Z" fill="#8c909b"/></svg><div class="a" style="left:1px;top:865px;width:50px;height:14px;transform-origin:0 0;transform:rotate(-90deg);font-size:12px;color:#c9cacf;white-space:nowrap;line-height:14px">Structure</div><svg width="12" height="12" viewBox="0 0 12 12" style="position:absolute;left:0px;top:870px"><rect x="8" y="1" width="4" height="4" fill="#9ea1ac"/><rect x="3" y="6" width="4" height="4" fill="#9ea1ac"/><rect x="8" y="6" width="4" height="4" fill="#9ea1ac"/></svg><div class="a" style="left:1px;top:950px;width:50px;height:14px;transform-origin:0 0;transform:rotate(-90deg);font-size:12px;color:#c9cacf;white-space:nowrap;line-height:14px">Favorites</div><svg width="16" height="16" viewBox="0 0 16 16" style="position:absolute;left:0px;top:952px"><path d="M7.40,1.90 L9.05,6.23 L13.68,6.46 L10.06,9.37 L11.28,13.84 L7.40,11.30 L3.52,13.84 L4.74,9.37 L1.12,6.46 L5.75,6.23 Z" fill="#9ea1ac"/></svg><div class="a" style="left:0.5px;top:1010px;width:30px;height:14px;transform-origin:0 0;transform:rotate(-90deg);font-size:12px;color:#c9cacf;white-space:nowrap;line-height:14px">Gulp</div><svg width="16" height="16" viewBox="0 0 16 16" style="position:absolute;left:0px;top:1013px"><path d="M3.5 3 H11.2 L10.5 9 H4.2 Z" fill="#9ea1ac"/><path d="M5 9.8 H9.8 L9.6 13 H5.2 Z" fill="#9ea1ac"/><circle cx="9.5" cy="1.8" r="1" fill="#9ea1ac"/></svg><svg width="15" height="14" viewBox="0 0 15 14" style="position:absolute;left:27px;top:35px"><rect x="0" y="0" width="14" height="13" fill="#8c8f9a"/><rect x="1" y="3" width="12" height="9" fill="#30323c"/><rect x="2" y="4" width="10" height="7" fill="#5b8fc9"/></svg><span class="a" style="left:46px;top:34px;font-size:13.5px;color:#d6d7da;white-space:nowrap;-webkit-text-stroke:0.2px currentColor">Project</span><svg width="10" height="6" viewBox="0 0 10 6" style="position:absolute;left:98px;top:40px"><path d="M0 0 H9 L4.5 5 Z" fill="#9598a3"/></svg><svg width="16" height="16" viewBox="0 0 16 16" style="position:absolute;left:288px;top:33px"><circle cx="7.9" cy="8" r="6.4" fill="none" stroke="#9ea1ac" stroke-width="1.3"/><path d="M1.5 8 H5.8 M10 8 H14.3 M7.9 1.6 V5.9 M7.9 10.1 V14.4" stroke="#9ea1ac" stroke-width="1.8"/></svg><svg width="14" height="16" viewBox="0 0 14 16" style="position:absolute;left:316px;top:33px"><rect x="0" y="1" width="12" height="2" fill="#9ea1ac"/><rect x="0" y="13" width="12" height="2" fill="#9ea1ac"/><path d="M3 7 L6 4 L9 7 Z M3 9 L9 9 L6 12 Z" fill="#9ea1ac"/></svg><svg width="14" height="16" viewBox="0 0 14 16" style="position:absolute;left:342px;top:33px"><rect x="0" y="7" width="12" height="2" fill="#9ea1ac"/><path d="M3 2 H9 L6 5 Z M3 14 H9 L6 11 Z" fill="#9ea1ac"/></svg><div class="a" style="left:364px;top:31px;width:1px;height:20px;background:#5e6170"></div><svg width="16" height="16" viewBox="0 0 16 16" style="position:absolute;left:373px;top:33px"><path d="M7.15,1.56 L8.85,1.56 L9.76,3.75 L10.80,4.35 L13.16,4.04 L14.01,5.51 L12.56,7.40 L12.56,8.60 L14.01,10.49 L13.16,11.96 L10.80,11.65 L9.76,12.25 L8.85,14.44 L7.15,14.44 L6.24,12.25 L5.20,11.65 L2.84,11.96 L1.99,10.49 L3.44,8.60 L3.44,7.40 L1.99,5.51 L2.84,4.04 L5.20,4.35 L6.24,3.75 Z" fill="#9ea1ac"/><circle cx="8" cy="8" r="2" fill="#444658"/></svg><div class="a" style="left:401px;top:40px;width:12px;height:2px;background:#9ea1ac"></div><svg width="16" height="18" viewBox="0 0 16 18" style="position:absolute;left:432px;top:34px"><path d="M0 4 L4 0 V4 Z" fill="#9ea1ac"/><path d="M5 0 H10 V14 H0 V5 H5 Z" fill="#9ea1ac"/><rect x="2" y="6" width="6" height="1.2" fill="#474757"/><rect x="2" y="8.2" width="6" height="1.2" fill="#474757"/><rect x="2" y="10.4" width="4" height="1.2" fill="#474757"/><rect x="7" y="8" width="7" height="8" fill="#5b5749"/><rect x="8" y="11.3" width="5" height="3.8" fill="#9ea1ac"/><path d="M9.2 11.5 V10 A1.3 1.3 0 0 1 11.8 10 V11.5" fill="none" stroke="#9ea1ac" stroke-width="1.1"/></svg><svg width="10" height="10" viewBox="0 0 10 10" style="position:absolute;left:579px;top:36px"><path d="M1.2 1.2 L8.8 8.8 M8.8 1.2 L1.2 8.8" stroke="#42a159" stroke-width="1.1"/></svg><div class="a" style="left:106px;top:641px;width:196px;height:34px;border:3px solid #fe0a1e;border-radius:5px"></div><svg width="16" height="18" viewBox="0 0 16 18" style="position:absolute;left:499px;top:375px"><path d="M2.7 8.3 A5.2 5.2 0 1 1 11.3 8.3 L10.3 10.3 H3.7 Z" fill="#f0f08a" stroke="#262836" stroke-width="0.8"/><rect x="4.3" y="11.2" width="5.6" height="1.1" fill="#c9c9c4"/><rect x="4.8" y="13.2" width="4.6" height="1" fill="#c9c9c4"/></svg><div class="a" style="left:406px;top:824px;width:14px;height:2px;background:#c0282a"></div><div class="a" style="left:409px;top:902px;width:8px;height:108px;border-radius:4px;background:#5d606b"></div><div class="a" style="left:21px;top:1026px;width:329px;height:8px;border-radius:4px;background:#5d606b"></div><div class="a" style="left:492px;top:1023px;width:786px;height:14px;background:#3e4043"></div><div class="a" style="left:495px;top:1026px;width:766px;height:8px;border-radius:4px;background:#8c78ae"></div>
<!-- bottom -->
<div class="a" style="left:0;top:1037px;width:1278px;height:1px;background:#2e303a"></div>
<div class="a" style="left:0;top:1038px;width:1278px;height:4px;background:#4b4e5a"></div>
</body></html>
